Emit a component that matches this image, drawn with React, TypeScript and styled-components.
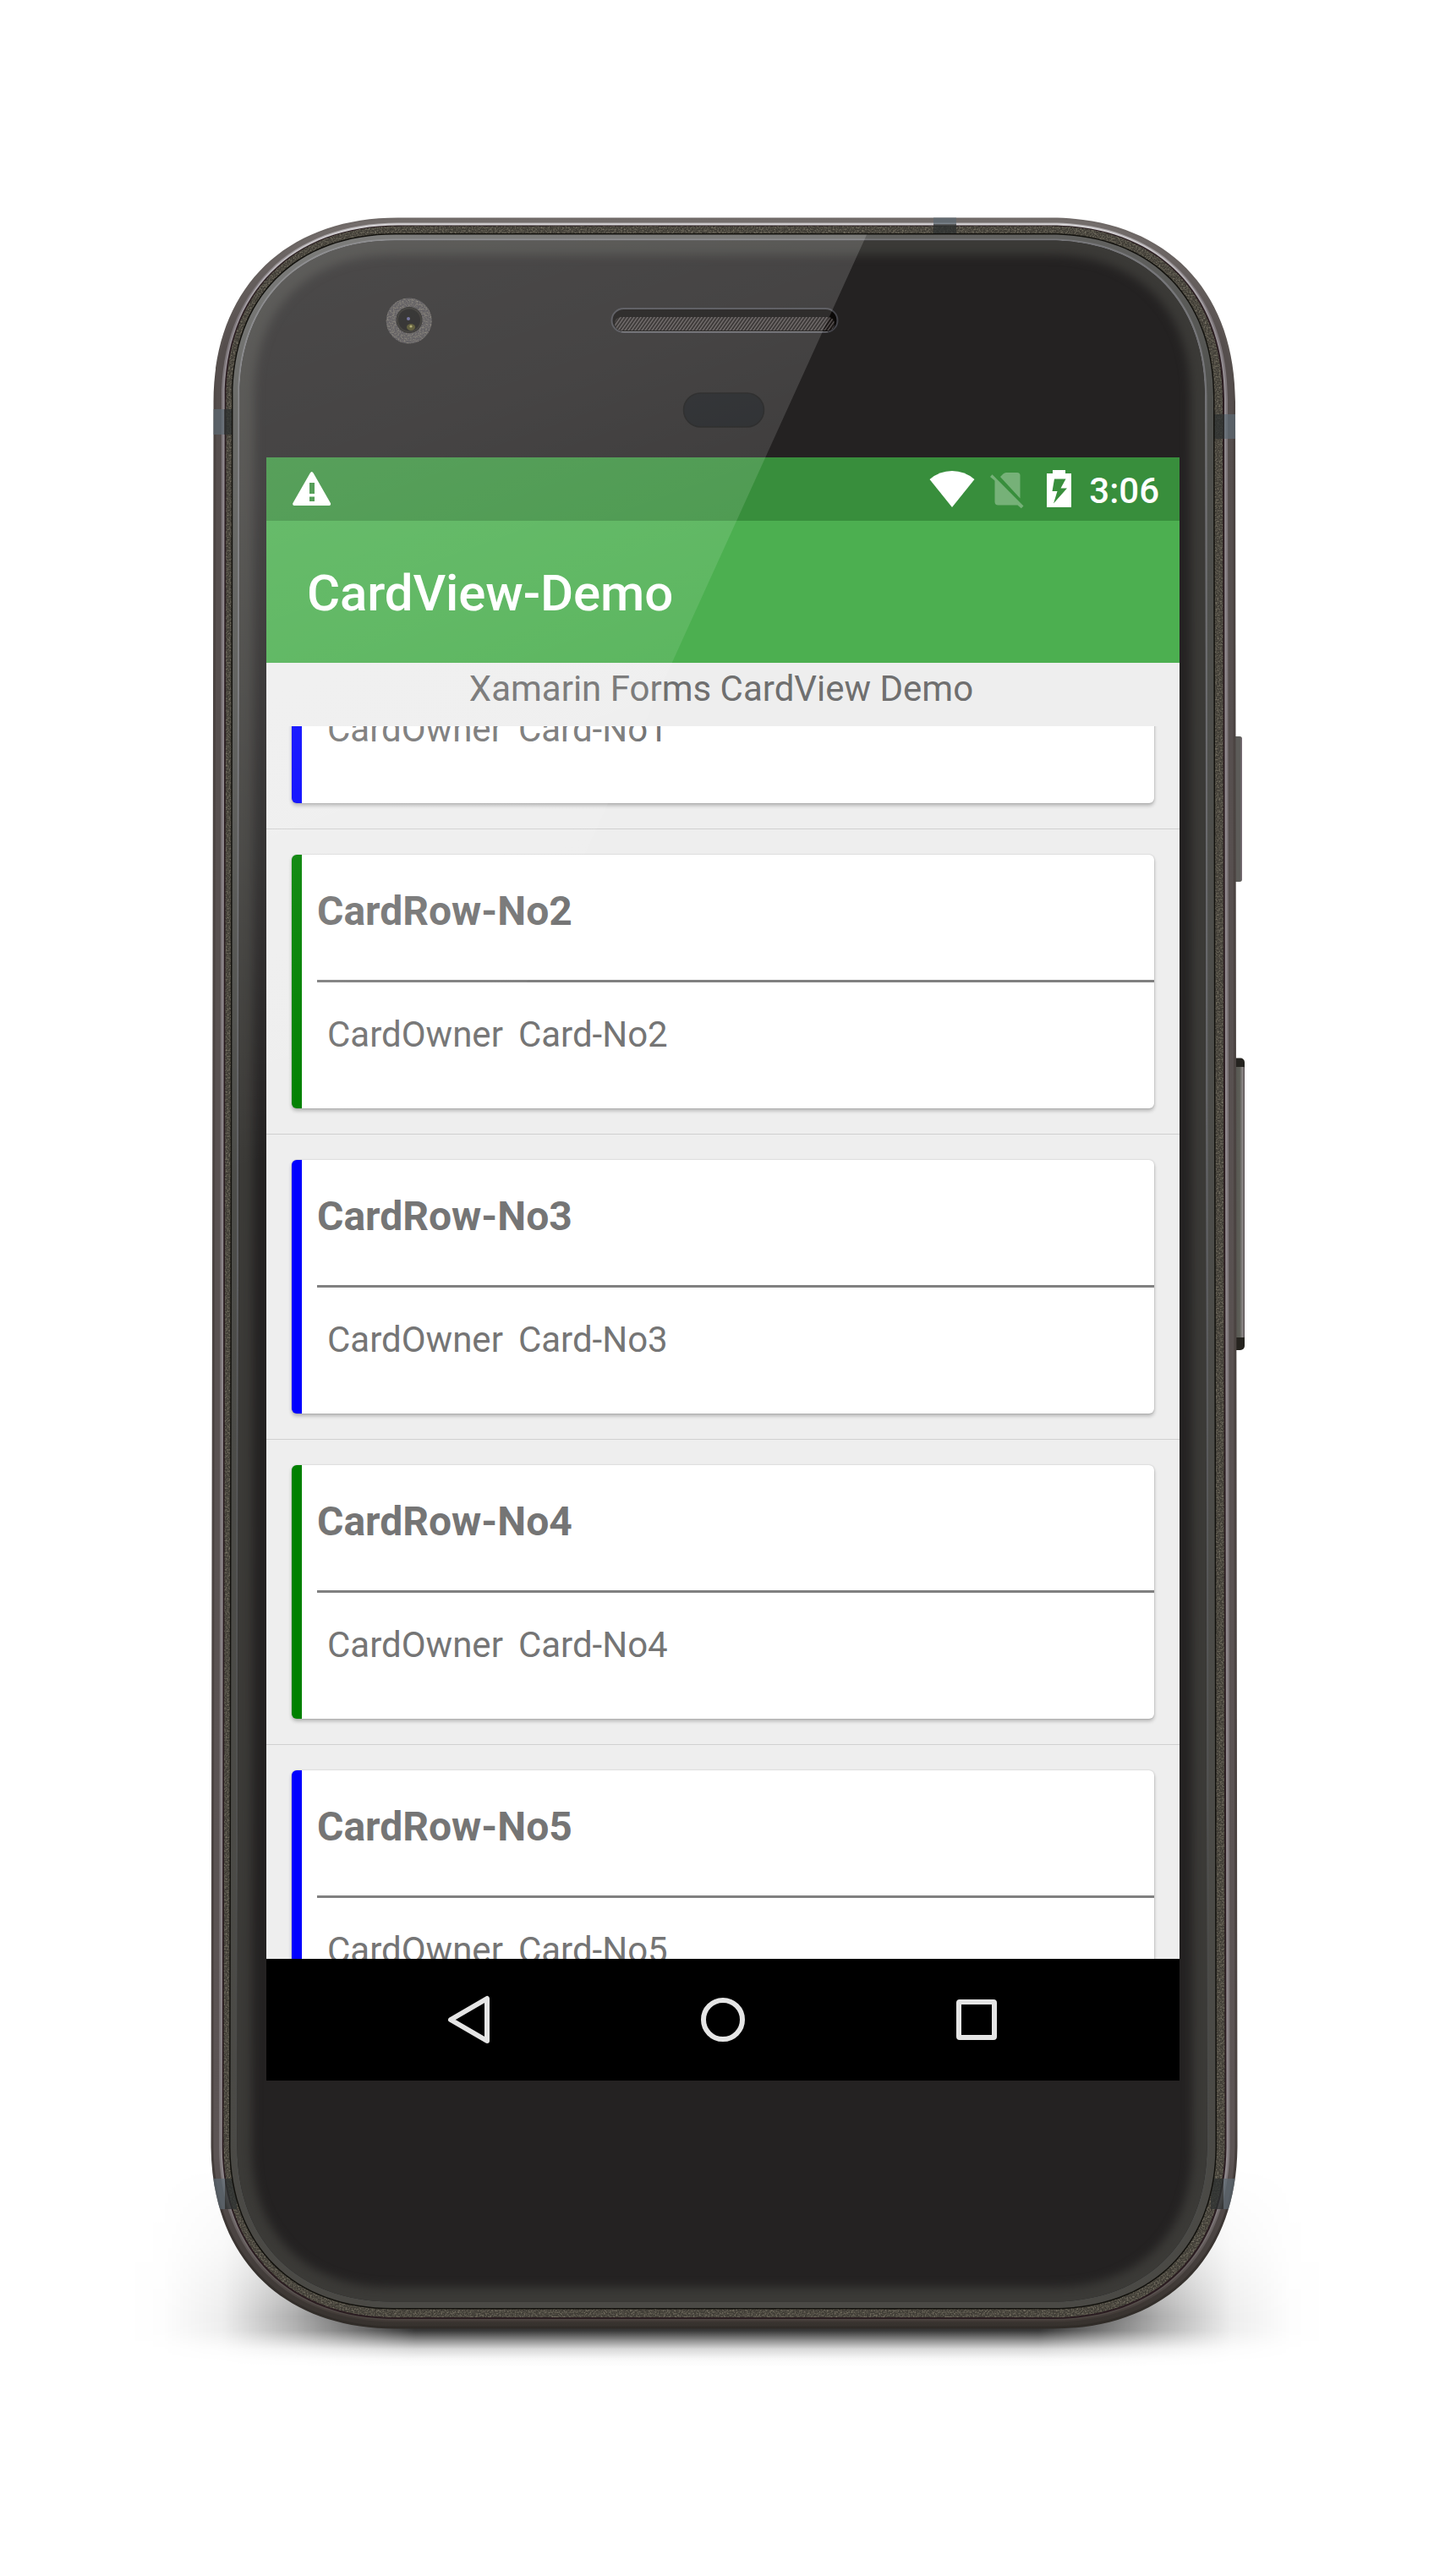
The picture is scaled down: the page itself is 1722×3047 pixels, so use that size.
import React from "react";
import styled, { createGlobalStyle } from "styled-components";

const GlobalStyle = createGlobalStyle`
  html, body { margin: 0; padding: 0; background: #fff; }
  * { box-sizing: border-box; }
`;

const Page = styled.main`
  position: relative;
  width: 1722px;
  height: 3047px;
  overflow: hidden;
  background: #ffffff;
  padding: 541px 327px 586px 315px;
  font-family: Roboto, "Noto Sans", sans-serif;
`;

const Artwork = styled.svg`
  position: absolute;
  inset: 0;
  width: 1722px;
  height: 3047px;
  pointer-events: none;
`;

const Screen = styled.section`
  position: relative;
  display: flex;
  flex-direction: column;
  width: 1080px;
  height: 1920px;
  overflow: hidden;
  background: #eeeeee;
`;

const StatusBar = styled.div`
  flex: none;
  display: flex;
  align-items: flex-start;
  justify-content: space-between;
  height: 75px;
  padding: 15px 24px 0 31px;
  background: #388e3c;
  color: #fff;
`;

const StatusIcons = styled.div`
  display: flex;
  align-items: flex-start;
`;

const StatusGlyph = styled.svg<{ $gap: number }>`
  display: block;
  height: 46px;
  margin-right: ${(p) => p.$gap}px;
`;

const Clock = styled.span`
  font-size: 42px;
  font-weight: 500;
  line-height: 49px;
  white-space: nowrap;
`;

const Toolbar = styled.header`
  flex: none;
  display: flex;
  align-items: center;
  height: 168px;
  padding: 4px 0 0 48px;
  background: #4caf50;
`;

const Title = styled.h1`
  margin: 0;
  color: #fff;
  font-size: 60px;
  font-weight: 500;
  line-height: 70px;
  letter-spacing: -0.12px;
  white-space: nowrap;
`;

const Caption = styled.div`
  flex: none;
  height: 75px;
  padding: 6px 4px 0 0;
  color: #6f6f6f;
  font-size: 42px;
  line-height: 49px;
  text-align: center;
`;

const List = styled.div`
  flex: 1;
  min-height: 0;
  overflow: hidden;
`;

const Rows = styled.div`
  margin-top: -239px;
`;

const Row = styled.div`
  height: 361px;
  padding: 30px;
  border-bottom: 1px solid #d0d0d0;
`;

const Card = styled.article<{ $accent: string }>`
  height: 300px;
  padding: 39px 0 0 18px;
  border-left: 12px solid ${(p) => p.$accent};
  border-radius: 6px;
  background: #fff;
  box-shadow: 0 0 2px rgba(0, 0, 0, 0.2), 0 3px 4px rgba(0, 0, 0, 0.24);
`;

const CardTitle = styled.h2`
  margin: 0;
  height: 109px;
  color: #757575;
  font-size: 48px;
  font-weight: 700;
  line-height: 56px;
`;

const Divider = styled.div`
  height: 3px;
  background: #808080;
`;

const CardMeta = styled.div`
  display: flex;
  gap: 18px;
  padding: 37px 0 0 12px;
  color: #757575;
  font-size: 42px;
  line-height: 49px;
  white-space: nowrap;
`;

const NavBar = styled.nav`
  flex: none;
  display: flex;
  align-items: center;
  justify-content: center;
  height: 144px;
  background: #000;
`;

const NavButton = styled.div`
  display: flex;
  align-items: center;
  justify-content: center;
  width: 300px;
  height: 144px;
`;

const NavGlyph = styled.svg`
  display: block;
  width: 60px;
  height: 60px;
  fill: none;
  stroke: #e5e5e5;
  stroke-width: 6;
  stroke-linejoin: round;
`;

type Insets = [number, number, number, number];

/* Outline of the handset, pulled in by [top, right, bottom, left]. */
const outline = ([t, r, b, l]: Insets) => {
  const top = 257.5 + t;
  const bottom = 2754.5 - b;
  const lt = 252.5 + l;
  const lb = 249.5 + l;
  const rt = 1461 - r;
  const rb = 1463.5 - r;
  const e = 218 - 1.085 * ((t + r + b + l) / 4);
  const k = e * (1 - 0.614);
  return [
    `M${lt + e} ${top}`,
    `H${rt - e}`,
    `C${rt - k} ${top} ${rt} ${top + k} ${rt} ${top + e}`,
    `L${rb} ${bottom - e}`,
    `C${rb} ${bottom - k} ${rb - k} ${bottom} ${rb - e} ${bottom}`,
    `H${lb + e}`,
    `C${lb + k} ${bottom} ${lb} ${bottom - k} ${lb} ${bottom - e}`,
    `L${lt} ${top + e}`,
    `C${lt} ${top + k} ${lt + k} ${top} ${lt + e} ${top}`,
    "Z",
  ].join(" ");
};

const OUTER: Insets = [0, 0, 0, 0];
const GRAIN: Insets = [10, 15, 13.5, 15];
const RIM: Insets = [20, 26, 24.5, 23];
const GLASS: Insets = [27, 36, 32, 31];

const Device = () => (
  <Artwork viewBox="0 0 1722 3047" aria-hidden="true">
    <defs>
      <linearGradient id="shadowX" gradientUnits="userSpaceOnUse" x1="150" y1="0" x2="1570" y2="0">
        <stop offset="0" stopColor="#000" stopOpacity="0" />
        <stop offset="0.03" stopColor="#000" stopOpacity="0.008" />
        <stop offset="0.08" stopColor="#000" stopOpacity="0.07" />
        <stop offset="0.14" stopColor="#000" stopOpacity="0.32" />
        <stop offset="0.24" stopColor="#000" stopOpacity="0.85" />
        <stop offset="0.76" stopColor="#000" stopOpacity="0.85" />
        <stop offset="0.86" stopColor="#000" stopOpacity="0.32" />
        <stop offset="0.92" stopColor="#000" stopOpacity="0.07" />
        <stop offset="0.97" stopColor="#000" stopOpacity="0.008" />
        <stop offset="1" stopColor="#000" stopOpacity="0" />
      </linearGradient>
      <linearGradient id="shadowY" gradientUnits="userSpaceOnUse" x1="0" y1="2560" x2="0" y2="2800">
        <stop offset="0" stopColor="#fff" stopOpacity="0" />
        <stop offset="0.4" stopColor="#fff" stopOpacity="0.35" />
        <stop offset="0.75" stopColor="#fff" stopOpacity="1" />
        <stop offset="0.82" stopColor="#fff" stopOpacity="0.92" />
        <stop offset="0.87" stopColor="#fff" stopOpacity="0.5" />
        <stop offset="0.91" stopColor="#fff" stopOpacity="0.18" />
        <stop offset="0.96" stopColor="#fff" stopOpacity="0.03" />
        <stop offset="1" stopColor="#fff" stopOpacity="0" />
      </linearGradient>
      <mask id="shadowMask" maskUnits="userSpaceOnUse" x="100" y="2540" width="1520" height="280">
        <rect x="100" y="2540" width="1520" height="280" fill="url(#shadowY)" />
      </mask>
      <linearGradient id="edge" x1="0" y1="0" x2="0" y2="1">
        <stop offset="0" stopColor="#6f6967" />
        <stop offset="0.1" stopColor="#4b4442" />
        <stop offset="0.9" stopColor="#4b4341" />
        <stop offset="1" stopColor="#2f2b27" />
      </linearGradient>
      <linearGradient id="metal" x1="0" y1="0" x2="0" y2="1">
        <stop offset="0" stopColor="#746e6c" />
        <stop offset="0.06" stopColor="#554e4d" />
        <stop offset="0.92" stopColor="#5c5454" />
        <stop offset="1" stopColor="#37322e" />
      </linearGradient>
      <linearGradient id="shine" x1="0" y1="0" x2="0" y2="1">
        <stop offset="0" stopColor="#b5b1b3" />
        <stop offset="0.03" stopColor="#7d767a" />
        <stop offset="0.93" stopColor="#7f787a" />
        <stop offset="1" stopColor="#403935" />
      </linearGradient>
      <linearGradient id="highlight" x1="0" y1="0" x2="0" y2="1">
        <stop offset="0" stopColor="#d6d4d6" />
        <stop offset="0.05" stopColor="#938d92" />
        <stop offset="0.93" stopColor="#928b8f" />
        <stop offset="1" stopColor="#4c4541" />
      </linearGradient>
      <linearGradient id="rim" x1="0" y1="0" x2="0" y2="1">
        <stop offset="0" stopColor="#61615f" />
        <stop offset="0.08" stopColor="#4f504d" />
        <stop offset="1" stopColor="#4a4945" />
      </linearGradient>
      <linearGradient id="rimInner" x1="0" y1="0" x2="0" y2="1">
        <stop offset="0" stopColor="#77777a" />
        <stop offset="0.5" stopColor="#5f6063" />
        <stop offset="0.85" stopColor="#4b4b49" />
        <stop offset="1" stopColor="#4a4a47" />
      </linearGradient>
      <linearGradient id="button" x1="0" y1="0" x2="1" y2="0">
        <stop offset="0" stopColor="#4d4b48" />
        <stop offset="0.65" stopColor="#5e5f58" />
        <stop offset="0.85" stopColor="#8d8888" />
        <stop offset="1" stopColor="#4d4548" />
      </linearGradient>
      <filter id="grain" x="0" y="0" width="100%" height="100%" colorInterpolationFilters="sRGB">
        <feTurbulence type="fractalNoise" baseFrequency="0.55" numOctaves="2" result="n" />
        <feColorMatrix in="n" type="matrix" values="0 0 0 0 0.5  0 0 0 0 0.48  0 0 0 0 0.42  0 2 0 0 -0.8" result="c" />
        <feComposite in="c" in2="SourceGraphic" operator="in" result="g" />
        <feMerge>
          <feMergeNode in="SourceGraphic" />
          <feMergeNode in="g" />
        </feMerge>
      </filter>
      <filter
        id="glow"
        filterUnits="userSpaceOnUse"
        x="200"
        y="200"
        width="1320"
        height="2620"
        colorInterpolationFilters="sRGB"
      >
        <feGaussianBlur stdDeviation="6" />
      </filter>
      <clipPath id="outerClip"><path d={outline(OUTER)} /></clipPath>
      <clipPath id="glassClip"><path d={outline(GLASS)} /></clipPath>
      <pattern id="mesh" width="4" height="6" patternUnits="userSpaceOnUse" patternTransform="skewX(-35)">
        <rect width="4" height="6" fill="#1a1615" />
        <rect width="1.5" height="6" fill="#625b5b" />
      </pattern>
    </defs>

    <rect x="100" y="2540" width="1520" height="280" fill="url(#shadowX)" mask="url(#shadowMask)" />

    <rect x="1456" y="871" width="13" height="172" rx="3" fill="#5d5c59" />
    <rect x="1467.5" y="873" width="1.5" height="168" fill="#756a72" />
    <rect x="1456" y="1251.500" width="16" height="345.500" rx="5" fill="#25231f" />
    <rect x="1456" y="1262" width="16" height="320" rx="1" fill="url(#button)" />

    <path d={outline(OUTER)} fill="url(#edge)" />
    <path d={outline([2, 3, 3, 3])} fill="url(#metal)" />
    <path d={outline([6, 9, 8, 9.5])} fill="url(#shine)" />
    <path d={outline([7, 11, 10, 11.5])} fill="url(#highlight)" />
    <path d={outline([9, 13, 11.5, 13.2])} fill="#2a1c20" />
    <path d={outline(GRAIN)} fill="#403d36" filter="url(#grain)" />
    <g clipPath="url(#outerClip)">
      <g fill="#5d6a74" opacity="0.7">
        <rect x="240" y="484" width="25" height="30" />
        <rect x="1104" y="250" width="27" height="15" />
        <rect x="1448" y="490" width="25" height="29" />
        <rect x="240" y="2577" width="26" height="36" />
        <rect x="1447" y="2577" width="26" height="36" />
      </g>
      <g fill="#2e3231" opacity="0.75">
        <rect x="265" y="484" width="12" height="30" />
        <rect x="1104" y="265" width="27" height="12" />
        <rect x="1435" y="490" width="13" height="29" />
        <rect x="266" y="2577" width="14" height="36" />
        <rect x="1432" y="2577" width="15" height="36" />
      </g>
    </g>
    <path d={outline([18.5, 24.5, 23, 21.5])} fill="#12110d" />
    <path d={outline(RIM)} fill="url(#rim)" />
    <path d={outline([25, 33.5, 31, 29])} fill="url(#rimInner)" />
    <path d={outline(GLASS)} fill="#242222" />
    <g clipPath="url(#glassClip)">
      <path d={outline(GLASS)} fill="none" stroke="#3b3a37" strokeWidth="34" filter="url(#glow)" />
    </g>

    <circle cx="483.700" cy="379.500" r="27" fill="#464347" filter="url(#grain)" />
    <circle cx="484" cy="378.500" r="15.500" fill="#121110" />
    <circle cx="484" cy="378.500" r="14" fill="none" stroke="#24221e" strokeWidth="2" />
    <circle cx="483" cy="377" r="2" fill="#5c5c90" />
    <ellipse cx="486" cy="387" rx="5" ry="4" fill="#45421c" />
    <circle cx="486" cy="386" r="1.600" fill="#a19d58" />

    <rect x="723.500" y="365" width="267" height="28" rx="14" fill="#0a0807" stroke="#44444a" strokeWidth="2" />
    <rect x="727" y="375" width="260" height="16" rx="8" fill="url(#mesh)" />
    <path d="M735 392.500H979" stroke="#77777c" strokeWidth="1.200" />

    <rect x="808.500" y="465" width="95" height="40" rx="20" fill="#121417" stroke="#0f0f0f" strokeWidth="1.500" />
  </Artwork>
);

const Gloss = () => (
  <Artwork viewBox="0 0 1722 3047" aria-hidden="true">
    <defs>
      <linearGradient id="gloss" gradientUnits="userSpaceOnUse" x1="142.120" y1="392.920" x2="476" y2="1316">
        <stop offset="0" stopColor="#fff" stopOpacity="0.175" />
        <stop offset="0.23" stopColor="#fff" stopOpacity="0.155" />
        <stop offset="0.43" stopColor="#fff" stopOpacity="0.125" />
        <stop offset="0.65" stopColor="#fff" stopOpacity="0.085" />
        <stop offset="0.95" stopColor="#fff" stopOpacity="0.015" />
        <stop offset="1" stopColor="#fff" stopOpacity="0" />
      </linearGradient>
      <clipPath id="rimClip"><path d={outline(RIM)} /></clipPath>
    </defs>
    <path d="M240 270H1028.500L560 1300V1500H240Z" fill="url(#gloss)" clipPath="url(#rimClip)" />
  </Artwork>
);

const cards = [
  { no: 1, title: "", accent: "#0000ff" },
  { no: 2, title: "CardRow-No2", accent: "#008000" },
  { no: 3, title: "CardRow-No3", accent: "#0000ff" },
  { no: 4, title: "CardRow-No4", accent: "#008000" },
  { no: 5, title: "CardRow-No5", accent: "#0000ff" },
];

export default function App() {
  return (
    <>
      <GlobalStyle />
      <Page>
        <Device />
        <Screen>
          <StatusBar>
            <StatusGlyph $gap={0} width="46" viewBox="0 0 46 46">
              <path
                fill="#fff"
                fillRule="evenodd"
                d="M20.800 3.600Q22.700 0.500 24.600 3.600L45 39.200Q45.600 42 43.500 42H1.800Q-0.300 42 0.300 39.200ZM20 15V28H26V15ZM20 31.500V37H26V31.500Z"
              />
            </StatusGlyph>
            <StatusIcons>
              <StatusGlyph $gap={18} width="54" viewBox="0 0 54 46">
                <path fill="#fff" d="M0.500 11Q12 1 27 1T53.500 11L27 44Z" />
              </StatusGlyph>
              <StatusGlyph $gap={27} width="40" viewBox="0 0 40 46">
                <g fill="#fff" opacity="0.31">
                  <path d="M12 8L15.500 4.500Q17 3 19 3H32Q35.500 3 35.500 6.500V33.500Z" />
                  <path d="M5.500 12.500V37.500Q5.500 41.500 9.500 41.500H32.500L36.800 45.300L39.500 42.500L2.500 5.300L0 8Z" />
                </g>
              </StatusGlyph>
              <StatusGlyph $gap={21} width="29" viewBox="0 0 29 46">
                <path
                  fill="#fff"
                  fillRule="evenodd"
                  d="M7 0H22V4H29V44H0V4H7ZM9 10.500L6.500 25H12.500L8 39.500L24 21.500H16.500L22.500 10.500Z"
                />
              </StatusGlyph>
              <Clock>3:06</Clock>
            </StatusIcons>
          </StatusBar>
          <Toolbar>
            <Title>CardView-Demo</Title>
          </Toolbar>
          <Caption>Xamarin Forms CardView Demo</Caption>
          <List>
            <Rows>
              {cards.map(({ no, title, accent }) => (
                <Row key={no}>
                  <Card $accent={accent}>
                    <CardTitle>{title}</CardTitle>
                    <Divider />
                    <CardMeta>
                      <span>CardOwner</span>
                      <span>Card-No{no}</span>
                    </CardMeta>
                  </Card>
                </Row>
              ))}
            </Rows>
          </List>
          <NavBar>
            <NavButton>
              <NavGlyph viewBox="0 0 60 60">
                <path d="M51 5V55L8 30Z" />
              </NavGlyph>
            </NavButton>
            <NavButton>
              <NavGlyph viewBox="0 0 60 60">
                <circle cx="30" cy="30" r="23" />
              </NavGlyph>
            </NavButton>
            <NavButton>
              <NavGlyph viewBox="0 0 60 60">
                <rect x="9" y="9" width="42" height="42" rx="1" />
              </NavGlyph>
            </NavButton>
          </NavBar>
        </Screen>
        <Gloss />
      </Page>
    </>
  );
}
